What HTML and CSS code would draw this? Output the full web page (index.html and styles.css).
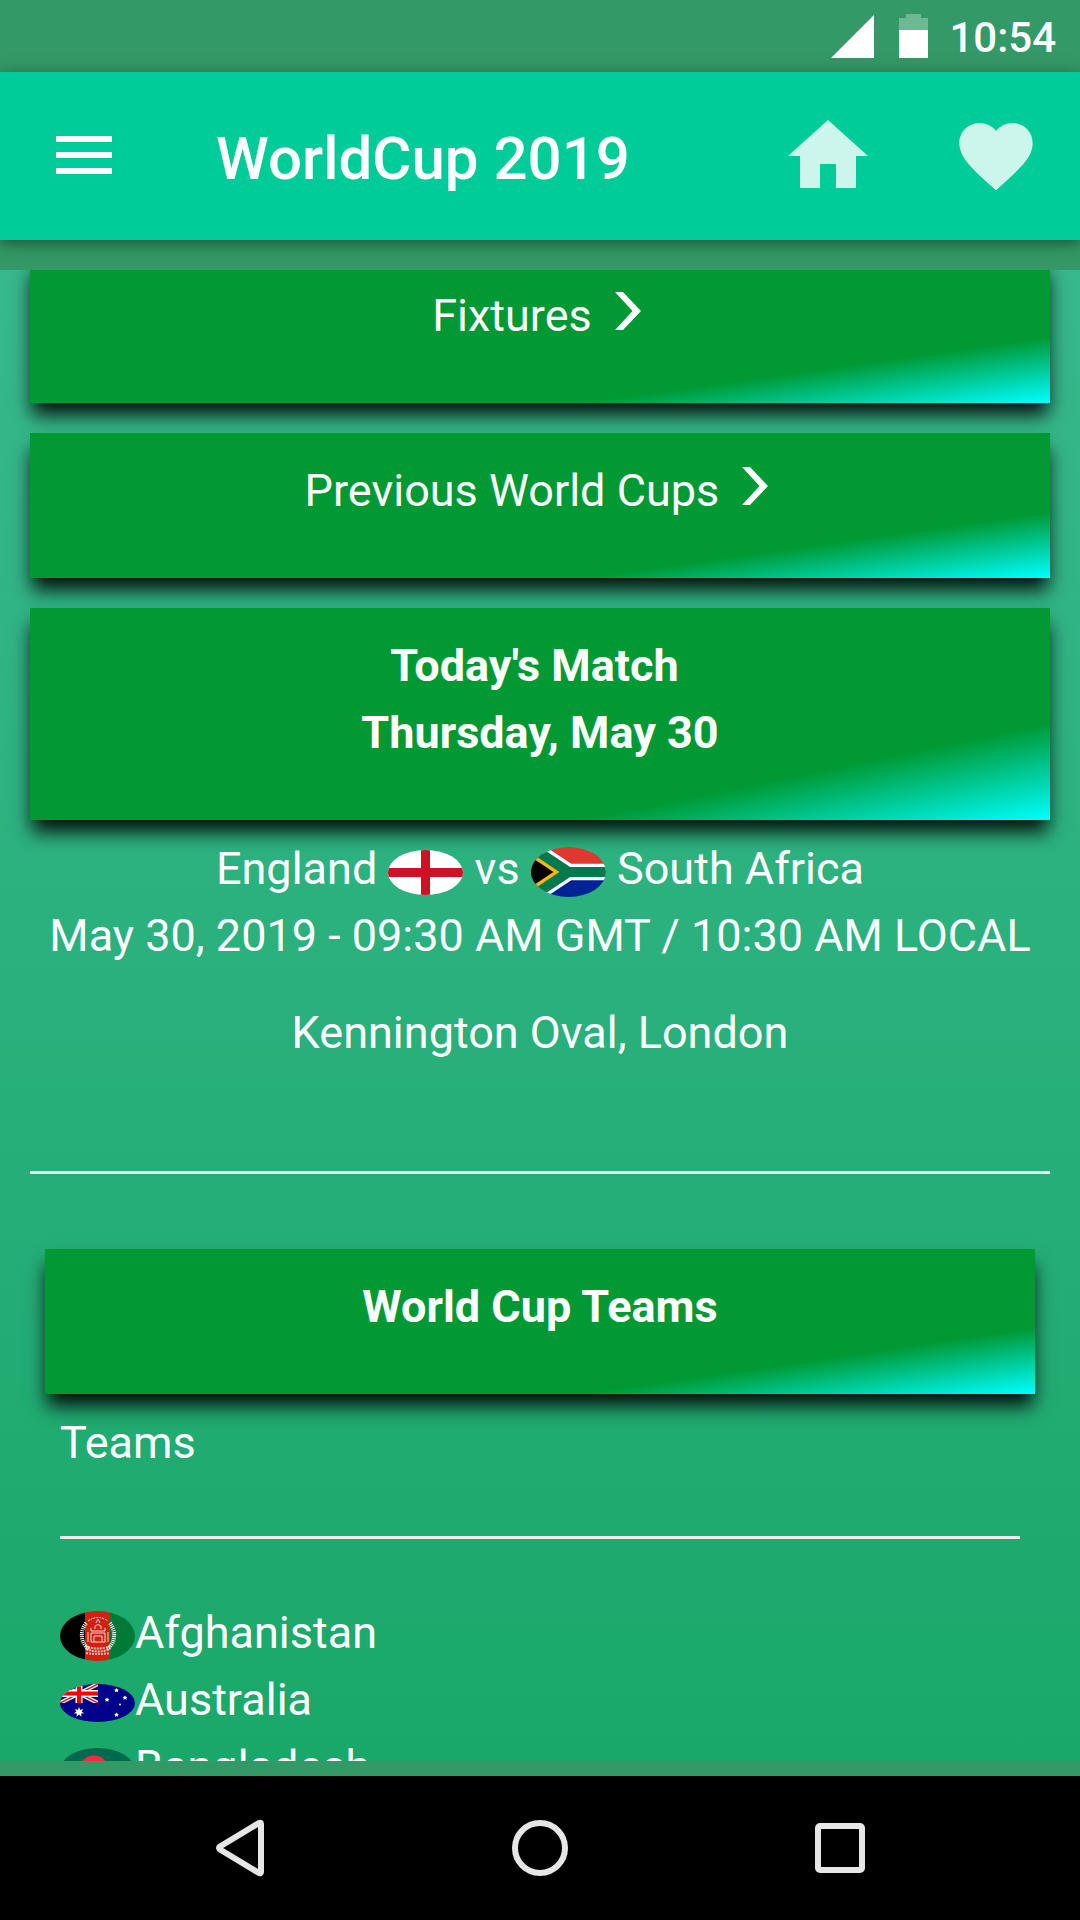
FILE: index.html
```html
<!DOCTYPE html>
<html lang="en">
<head>
<meta charset="utf-8">
<meta name="viewport" content="width=device-width, initial-scale=1">
<title>WorldCup 2019</title>
<link rel="stylesheet" href="styles.css">
</head>
<body>
<div class="app">
  <div class="status-bar">
    <svg class="status-signal" viewBox="0 0 43 43" aria-hidden="true"><path d="M43 0v43H0z" fill="#fff"/></svg>
    <svg class="status-battery" viewBox="0 0 29 44" aria-hidden="true">
      <path d="M7 0h15v4h7v12H0V4h7z" fill="#fff" opacity=".3"/>
      <path d="M0 16h29v28H0z" fill="#fff"/>
    </svg>
    <span class="status-time">10:54</span>
  </div>

  <header class="app-bar">
    <button class="icon-button menu-button" type="button" aria-label="Menu">
      <svg class="menu-icon" viewBox="0 0 56 38" aria-hidden="true"><path d="M0 0h56v6H0zM0 16h56v6H0zM0 32h56v6H0z"/></svg>
    </button>
    <h1 class="app-title">WorldCup 2019</h1>
    <nav class="app-actions">
      <button class="icon-button action-button" type="button" aria-label="Home">
        <svg class="home-icon" viewBox="0 0 24 24" aria-hidden="true"><path d="M10 20v-6h4v6h5v-8h3L12 3 2 12h3v8z"/></svg>
      </button>
      <button class="icon-button action-button" type="button" aria-label="Favourites">
        <svg class="heart-icon" viewBox="0 0 24 24" aria-hidden="true"><path d="M12 21.35l-1.45-1.32C5.4 15.36 2 12.28 2 8.5 2 5.42 4.42 3 7.5 3c1.74 0 3.41.81 4.5 2.09C13.09 3.81 14.76 3 16.5 3 19.58 3 22 5.42 22 8.5c0 3.78-3.4 6.86-8.55 11.54L12 21.35z"/></svg>
      </button>
    </nav>
  </header>

  <main class="content">
    <div class="scroll">
      <a class="panel" href="#fixtures">Fixtures <svg class="chevron" viewBox="0 0 45 45" aria-hidden="true"><path d="M12 0h8l18 19-18 19h-8l17.500-19z" fill="#fff"/></svg></a>
      <a class="panel" href="#previous">Previous World Cups <svg class="chevron" viewBox="0 0 45 45" aria-hidden="true"><path d="M12 0h8l18 19-18 19h-8l17.500-19z" fill="#fff"/></svg></a>
      <h2 class="panel">Today's Match&nbsp;<br>Thursday, May 30</h2>

      <section class="match">
        <p class="match-line">England
          <svg class="flag flag-england" viewBox="0 0 75 45" role="img" aria-label="England flag"><path fill="#fff" d="M0 0h75v45H0z"/><path fill="#ce1124" d="M33 0h9v18h33v9H42v18h-9V27H0v-9h33z"/></svg>
          vs
          <svg class="flag flag-south-africa" viewBox="0 0 90 60" role="img" aria-label="South Africa flag">
            <clipPath id="hoist"><path d="M0 0l45 30L0 60z"/></clipPath>
            <path fill="#de3831" d="M0 0h90v30H0z"/><path fill="#002395" d="M0 30h90v30H0z"/>
            <path d="M0 0l45 30h45M0 60l45-30" fill="none" stroke="#fff" stroke-width="20"/>
            <path d="M0 0l45 30L0 60" fill="#000" stroke="#ffb612" stroke-width="20" clip-path="url(#hoist)"/>
            <path d="M0 0l45 30h45M0 60l45-30" fill="none" stroke="#007a4d" stroke-width="12"/>
          </svg>
          South Africa</p>
        <p class="match-line">May 30, 2019 - 09:30 AM GMT / 10:30 AM LOCAL</p>
        <p class="match-venue">Kennington Oval, London</p>
      </section>

      <hr class="rule">

      <section class="teams">
        <h2 class="panel">World Cup Teams</h2>
        <div class="teams-body">
          <h3 class="teams-heading">Teams</h3>
          <hr class="rule">
          <ul class="team-list">
            <li><svg class="flag flag-afghanistan" viewBox="0 0 75 50" aria-hidden="true">
              <path d="M0 0h25v50H0z"/><path fill="#d32011" d="M25 0h25v50H25z"/><path fill="#007a36" d="M50 0h25v50H50z"/>
              <g fill="none" stroke="#fff">
                <path d="M26 12c-6 8-6 20 3 26M50 12c6 8 6 20-3 26" stroke-width="4" stroke-dasharray="1 1"/>
                <path d="M28 10q10-7 20 0" stroke-dasharray="2 1"/>
                <path d="M36 12l2-4 2 4M35 18v-3q3-3 6 0v3M31 20h14M31 22h14v9H31zM34 31v-6h8v6M28 21v10M48 21v10M31 17v3M45 17v3" stroke-opacity=".8"/>
                <path d="M25 35q13 5 26 0M26 38q12 5 24 0M26 42q12 2 24 0" stroke-width="2" stroke-dasharray="2 1" stroke-opacity=".7"/>
              </g>
            </svg>Afghanistan</li>
            <li><svg class="flag flag-australia" viewBox="0 0 75 38" aria-hidden="true">
              <path fill="#00008b" d="M0 0h75v38H0z"/>
              <svg width="38" height="19" viewBox="0 0 38 19">
                <path d="M0 0l38 19M38 0L0 19" stroke="#fff" stroke-width="4"/><path d="M0 0l38 19M38 0L0 19" stroke="#f00" stroke-width="1.400"/>
                <path d="M19 0v19M0 9.500h38" stroke="#fff" stroke-width="7"/><path d="M19 0v19M0 9.500h38" stroke="#f00" stroke-width="4"/>
              </svg>
              <g fill="#fff">
                <path d="M19 23l1.200 3 3-1-1.600 2.700 2.700 1.600-3.200.3.400 3.200-2.500-2.200-2.500 2.200.4-3.200-3.200-.3 2.700-1.600-1.600-2.700 3 1z"/>
                <path d="M56.500 4l.8 1.300 1.500.2-1 1.200.3 1.500-1.600-.6-1.600.6.300-1.500-1-1.200 1.500-.2zM65 11.500l.8 1.300 1.500.2-1 1.200.3 1.500-1.600-.6-1.600.6.300-1.500-1-1.200 1.500-.2zM47 13.500l.8 1.300 1.500.2-1 1.200.3 1.500-1.600-.6-1.600.6.300-1.500-1-1.200 1.500-.2zM56.500 28.500l.8 1.300 1.500.2-1 1.200.3 1.500-1.600-.6-1.600.6.300-1.500-1-1.200 1.500-.2z"/>
                <circle cx="60" cy="20.500" r="1"/>
              </g>
            </svg>Australia</li>
            <li><svg class="flag flag-bangladesh" viewBox="0 0 75 45" aria-hidden="true"><path fill="#006a4e" d="M0 0h75v45H0z"/><circle cx="34" cy="22.500" r="15" fill="#f42a41"/></svg>Bangladesh</li>
          </ul>
        </div>
      </section>
    </div>
  </main>

  <nav class="system-nav">
    <button class="icon-button system-button" type="button" aria-label="Back">
      <svg class="system-icon" viewBox="0 0 60 60" aria-hidden="true"><path d="M10 28.500L49 5q2-1 2 1v48q0 2-2 1L10 31.500q-2-1.500 0-3z" fill="none" stroke="#e6e6e6" stroke-width="6" stroke-linejoin="round"/></svg>
    </button>
    <button class="icon-button system-button" type="button" aria-label="Home screen">
      <svg class="system-icon" viewBox="0 0 60 60" aria-hidden="true"><circle cx="30" cy="30" r="25" fill="none" stroke="#e6e6e6" stroke-width="6"/></svg>
    </button>
    <button class="icon-button system-button" type="button" aria-label="Recent apps">
      <svg class="system-icon" viewBox="0 0 60 60" aria-hidden="true"><rect x="8" y="8" width="44" height="44" rx="2" fill="none" stroke="#e6e6e6" stroke-width="6"/></svg>
    </button>
  </nav>
</div>
</body>
</html>
```
FILE: styles.css
```css
* {
  box-sizing: border-box;
}

body {
  margin: 0;
  font-family: Roboto, "Liberation Sans", sans-serif;
  font-size: 45px;
  line-height: 67px;
  color: #fff;
  background: #339966;
}

h1, h2, h3, p, ul {
  margin: 0;
  padding: 0;
}

svg {
  display: block;
}

.app {
  display: flex;
  flex-direction: column;
  height: 100vh;
}

.icon-button {
  display: flex;
  align-items: center;
  justify-content: center;
  padding: 0;
  border: 0;
  background: none;
}

/* Status bar */
.status-bar {
  display: flex;
  flex: none;
  justify-content: flex-end;
  align-items: center;
  height: 72px;
  padding-right: 24px;
}

.status-signal {
  width: 43px;
  height: 43px;
  margin-right: 25px;
}

.status-battery {
  width: 29px;
  height: 44px;
  margin-right: 21px;
}

.status-time {
  padding-top: 2px;
  font-size: 42px;
  font-weight: 500;
}

/* App bar */
.app-bar {
  display: flex;
  flex: none;
  align-items: center;
  height: 168px;
  margin-bottom: 30px;
  background: #00cc99;
  box-shadow: 0 6px 6px rgba(0, 0, 0, 0.1), 0 3px 18px rgba(0, 0, 0, 0.35);
}

.menu-button {
  width: 168px;
  height: 168px;
  padding-bottom: 2px;
}

.menu-icon {
  width: 56px;
  height: 38px;
  fill: #fff;
}

.app-title {
  flex: 1;
  padding: 4px 0 0 48px;
  font-size: 60px;
  font-weight: 500;
}

.app-actions {
  display: flex;
}

.action-button {
  width: 168px;
  height: 168px;
}

.home-icon,
.heart-icon {
  width: 96px;
  height: 96px;
  fill: rgba(255, 255, 255, 0.8);
}

.heart-icon {
  width: 88px;
  height: 88px;
}

/* Scrolled content: the first panel is partly above the top edge */
.content {
  flex: 1;
  min-height: 0;
  margin-bottom: 15px;
  overflow: hidden;
  background: linear-gradient(#38b88d, #1aa86a);
}

.scroll {
  margin-top: -12px;
  padding: 0 30px;
}

.panel {
  display: block;
  padding: 24px 0 54px;
  font-size: 45px;
  font-weight: 400;
  text-align: center;
  text-decoration: none;
  color: #fff;
  background: linear-gradient(to bottom right, #009933 77%, #00ffff);
  box-shadow: 0 14px 18px -2px rgba(0, 0, 0, 0.9);
}

.panel + .panel {
  margin-top: 30px;
}

h2.panel {
  font-weight: 700;
}

.chevron {
  display: inline-block;
  width: 45px;
  height: 45px;
  margin-bottom: -6px;
  vertical-align: baseline;
}

.match {
  padding: 15px 0 105px;
  text-align: center;
}

.match-line {
  height: 67px;
  white-space: nowrap;
}

.match-venue {
  margin-top: 30px;
}

.flag {
  display: inline-block;
  width: 75px;
  vertical-align: middle;
  border-radius: 50%;
}

.flag-england,
.flag-bangladesh {
  height: 45px;
}

.flag-south-africa,
.flag-afghanistan {
  height: 50px;
}

.flag-australia {
  height: 38px;
}

.rule {
  height: 3px;
  margin: 0;
  border: 0;
  background: #eee;
}

.teams {
  padding: 75px 15px 0;
}

.teams-body {
  padding: 15px 15px 0;
}

.teams-heading {
  margin-bottom: 60px;
  font-size: 45px;
  font-weight: 400;
}

.team-list {
  margin-top: 60px;
  list-style: none;
}

.team-list li {
  height: 67px;
}

/* System navigation */
.system-nav {
  display: flex;
  flex: none;
  justify-content: center;
  height: 144px;
  background: #000;
}

.system-button {
  width: 300px;
  height: 144px;
}

.system-icon {
  width: 60px;
  height: 60px;
}
```
